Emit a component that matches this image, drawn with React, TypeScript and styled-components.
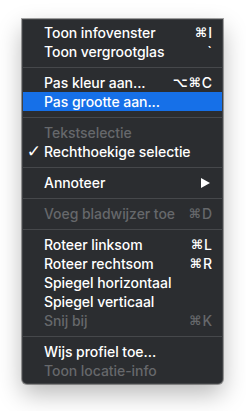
import React from "react";
import styled, { createGlobalStyle } from "styled-components";

const Global = createGlobalStyle`
  html, body { margin: 0; padding: 0; background: #ffffff; }
  body { font-family: Inter, "Liberation Sans", Arial, sans-serif; -webkit-font-smoothing: antialiased; }
`;

const Page = styled.div`
  padding: 19px 0 0 22px;
  width: 246px;
  height: 411px;
  box-sizing: border-box;
`;

const Menu = styled.div`
  width: 201px;
  box-sizing: border-box;
  padding: 4px 0;
  background: #2b2d30;
  border-radius: 0 0 5px 5px;
  box-shadow: inset 0 0 0 1px rgba(255, 255, 255, 0.1), 0 0 0 1px rgba(0, 0, 0, 0.35),
    0 10px 24px rgba(0, 0, 0, 0.28);
  display: flex;
  flex-direction: column;
`;

const Row = styled.div<{ $active?: boolean; $disabled?: boolean }>`
  display: flex;
  align-items: center;
  height: 19px;
  padding: 0 10px 0 21px;
  margin: 0 1px;
  background: ${(p) => (p.$active ? "#1670e8" : "transparent")};
  color: ${(p) => (p.$disabled ? "#66686b" : "#ffffff")};
  font-size: 14px;
  font-weight: 500;
  line-height: 19px;
  white-space: nowrap;
`;

const Check = styled.span`
  width: 0;
  display: flex;
  justify-content: flex-end;
  position: relative;
  left: -3px;
  font-family: "DejaVu Sans", sans-serif;
  font-size: 17px;
  font-weight: 700;
`;

const Label = styled.span`
  flex: 1;
  letter-spacing: -0.05px;
`;

const Shortcut = styled.span`
  display: flex;
  align-items: center;
  gap: 1px;
  font-size: 14px;
`;

const Sym = styled.span`
  font-family: "DejaVu Sans", sans-serif;
  font-size: 13px;
  font-weight: 700;
`;

const Separator = styled.div`
  height: 1px;
  margin: 6px 1px 5px;
  background: #46484b;
`;

const Arrow = () => (
  <svg width="9" height="10" viewBox="0 0 9 10" style={{ marginRight: 2 }}>
    <path d="M0 0 L9 5 L0 10 Z" fill="#ffffff" />
  </svg>
);

type Item =
  | { sep: true }
  | {
      sep?: false;
      label: string;
      keys?: React.ReactNode;
      active?: boolean;
      disabled?: boolean;
      checked?: boolean;
      sub?: boolean;
    };

const cmd = (k: string) => (
  <>
    <Sym>⌘</Sym>
    {k}
  </>
);

const items: Item[] = [
  { label: "Toon infovenster", keys: cmd("I") },
  { label: "Toon vergrootglas", keys: "`" },
  { sep: true },
  {
    label: "Pas kleur aan...",
    keys: (
      <>
        <Sym>⌥</Sym>
        <Sym>⌘</Sym>C
      </>
    ),
  },
  { label: "Pas grootte aan...", active: true },
  { sep: true },
  { label: "Tekstselectie", disabled: true },
  { label: "Rechthoekige selectie", checked: true },
  { sep: true },
  { label: "Annoteer", sub: true },
  { sep: true },
  { label: "Voeg bladwijzer toe", keys: cmd("D"), disabled: true },
  { sep: true },
  { label: "Roteer linksom", keys: cmd("L") },
  { label: "Roteer rechtsom", keys: cmd("R") },
  { label: "Spiegel horizontaal" },
  { label: "Spiegel verticaal" },
  { label: "Snij bij", keys: cmd("K"), disabled: true },
  { sep: true },
  { label: "Wijs profiel toe..." },
  { label: "Toon locatie-info", disabled: true },
];

export default function App() {
  return (
    <>
      <Global />
      <Page>
        <Menu>
          {items.map((it, i) =>
            it.sep ? (
              <Separator key={i} />
            ) : (
              <Row key={i} $active={it.active} $disabled={it.disabled}>
                <Check>{it.checked ? "✓" : ""}</Check>
                <Label>{it.label}</Label>
                {it.keys && <Shortcut>{it.keys}</Shortcut>}
                {it.sub && <Arrow />}
              </Row>
            )
          )}
        </Menu>
      </Page>
    </>
  );
}
